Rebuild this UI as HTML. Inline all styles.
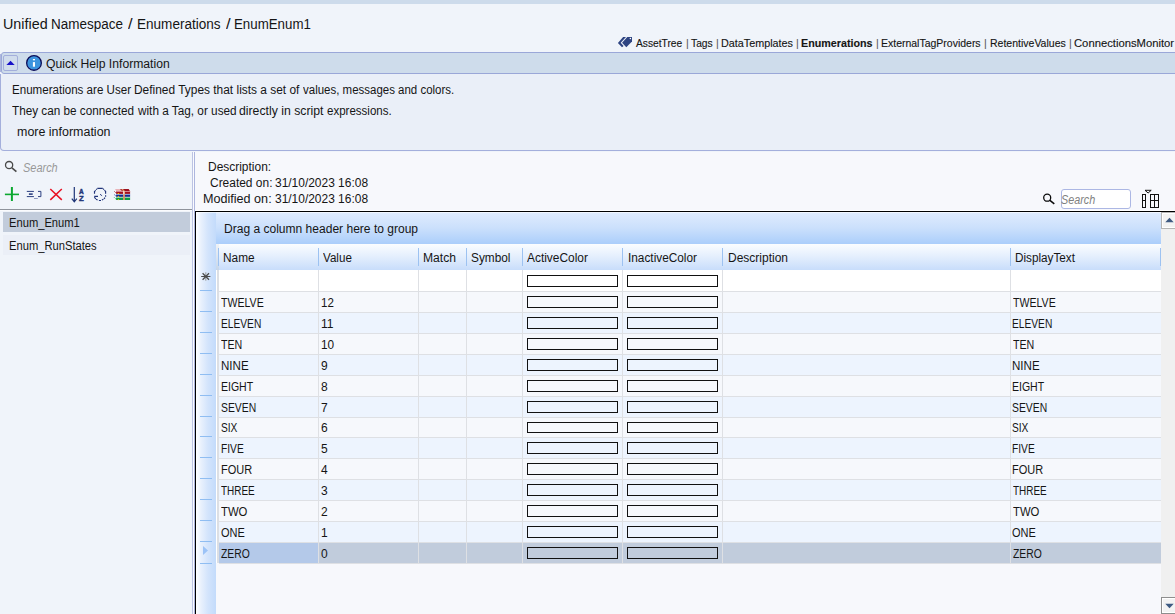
<!DOCTYPE html>
<html><head><meta charset="utf-8"><title>Enumerations</title>
<style>
*{box-sizing:border-box;margin:0;padding:0}
html,body{width:1175px;height:614px;overflow:hidden}
body{background:#f0f4fa;font-family:"Liberation Sans",sans-serif;position:relative}
div,span,svg{position:absolute}
.t{white-space:nowrap;line-height:1;transform-origin:0 0;color:#151515}
.r{left:219px;width:942px}
.v{width:1px;background:#d9d9d9}
.cb{width:91px;height:12px;border:1px solid #111}
.il{left:200px;width:12px;height:1px;background:#8fbdf2}
.hs{top:248px;width:1px;height:18px;background:#9dc2f1}
</style></head><body>
<div style="left:0px;top:0px;width:1175px;height:4px;background:#cddbeb;"></div>
<div style="left:0px;top:54px;width:1px;height:18px;background:#adb7de;"></div>
<div style="left:1px;top:52px;width:1180px;height:22px;background:#cedceb;border:1px solid #9aa7d8;border-radius:3px 0 0 3px"></div>
<div style="left:0px;top:74px;width:1180px;height:77px;background:#eaeff8;border:1px solid #a4afdc;border-top:none;border-radius:0 0 0 4px"></div>
<div style="left:3px;top:55px;width:15px;height:16px;background:#d0dcec;border:1px solid #a3aedb;border-radius:2px"></div>
<svg style="left:6px;top:60px" width="10" height="6" viewBox="0 0 10 6"><path d="M0.4 5.1 L4.55 0.7 L8.7 5.1Z" fill="#1812c8"/></svg>
<svg style="left:24px;top:54px" width="20" height="20" viewBox="0 0 20 20"><circle cx="10" cy="8.9" r="7.35" fill="#3d94de" stroke="#0b0c58" stroke-width="1.3"/><rect x="8.9" y="8.1" width="2.1" height="4.6" fill="#fff"/><rect x="8.9" y="5" width="2.1" height="1.3" fill="#fff"/></svg>
<div style="left:195px;top:152px;width:980px;height:59px;background:#f7f8fc;"></div>
<div style="left:195px;top:210px;width:980px;height:1px;background:#ffffff;"></div>
<div style="left:192px;top:152px;width:1px;height:462px;background:#bcc3e3;"></div>
<div style="left:193px;top:152px;width:1px;height:462px;background:#fbfbfe;"></div>
<div style="left:194px;top:152px;width:1px;height:462px;background:#adb6de;"></div>
<div style="left:0px;top:209px;width:192px;height:1px;background:#8e939b;"></div>
<div style="left:0px;top:210px;width:192px;height:1px;background:#fafbfd;"></div>
<div style="left:3px;top:212px;width:187px;height:20px;background:#c2ccdb;"></div>
<div style="left:3px;top:235px;width:187px;height:20px;background:#ebeff7;"></div>
<div style="left:195px;top:211px;width:980px;height:403px;background:#f7f8fc;"></div>
<div style="left:195px;top:211px;width:980px;height:1px;background:#000;"></div>
<div style="left:195px;top:211px;width:1px;height:403px;background:#000;"></div>
<div style="left:196px;top:212px;width:20px;height:402px;background:linear-gradient(90deg,#ffffff 0,#e9f1fd 25%,#d3e4fc 60%,#c3dbfb 100%);"></div>
<div style="left:216px;top:212px;width:945px;height:32px;background:linear-gradient(#e0ecfe 0,#cbe0fc 50%,#abcefb 100%);"></div>
<div style="left:196px;top:212px;width:965px;height:1px;background:rgba(255,255,255,.6);"></div>
<div style="left:216px;top:244px;width:945px;height:26px;background:linear-gradient(#fbfdff 0,#e3eefd 50%,#c8ddfb 100%);"></div>
<div style="left:216px;top:244px;width:3px;height:26px;background:linear-gradient(#f1f3f6,#c6d6ea);"></div>
<div class="hs" style="left:218px"></div><div class="hs" style="left:318px"></div><div class="hs" style="left:418px"></div><div class="hs" style="left:466px"></div><div class="hs" style="left:522px"></div><div class="hs" style="left:622px"></div><div class="hs" style="left:722px"></div><div class="hs" style="left:1010px"></div><div class="hs" style="left:1160px"></div>
<div style="left:216px;top:270px;width:1px;height:293px;background:#fff;"></div>
<div style="left:217px;top:270px;width:2px;height:293px;background:#dcdfe4;"></div>
<div style="left:219px;top:270px;width:942px;height:21px;background:#ffffff;"></div>
<div style="left:219px;top:292px;width:942px;height:20px;background:#f6f8fc;"></div>
<div style="left:219px;top:313px;width:942px;height:20px;background:#edf4fe;"></div>
<div style="left:219px;top:334px;width:942px;height:20px;background:#f6f8fc;"></div>
<div style="left:219px;top:355px;width:942px;height:20px;background:#edf4fe;"></div>
<div style="left:219px;top:376px;width:942px;height:20px;background:#f6f8fc;"></div>
<div style="left:219px;top:397px;width:942px;height:20px;background:#edf4fe;"></div>
<div style="left:219px;top:418px;width:942px;height:19px;background:#f6f8fc;"></div>
<div style="left:219px;top:438px;width:942px;height:20px;background:#edf4fe;"></div>
<div style="left:219px;top:459px;width:942px;height:20px;background:#f6f8fc;"></div>
<div style="left:219px;top:480px;width:942px;height:20px;background:#edf4fe;"></div>
<div style="left:219px;top:501px;width:942px;height:20px;background:#f6f8fc;"></div>
<div style="left:219px;top:522px;width:942px;height:20px;background:#edf4fe;"></div>
<div style="left:219px;top:543px;width:942px;height:20px;background:#c1ccdc;"></div>
<div style="left:219px;top:543px;width:99px;height:20px;background:#b4c9e9;"></div>
<div style="left:219px;top:291px;width:942px;height:1px;background:#dee0e4;"></div>
<div style="left:219px;top:312px;width:942px;height:1px;background:#dee0e4;"></div>
<div style="left:219px;top:333px;width:942px;height:1px;background:#dee0e4;"></div>
<div style="left:219px;top:354px;width:942px;height:1px;background:#dee0e4;"></div>
<div style="left:219px;top:375px;width:942px;height:1px;background:#dee0e4;"></div>
<div style="left:219px;top:396px;width:942px;height:1px;background:#dee0e4;"></div>
<div style="left:219px;top:417px;width:942px;height:1px;background:#dee0e4;"></div>
<div style="left:219px;top:437px;width:942px;height:1px;background:#dee0e4;"></div>
<div style="left:219px;top:458px;width:942px;height:1px;background:#dee0e4;"></div>
<div style="left:219px;top:479px;width:942px;height:1px;background:#dee0e4;"></div>
<div style="left:219px;top:500px;width:942px;height:1px;background:#dee0e4;"></div>
<div style="left:219px;top:521px;width:942px;height:1px;background:#dee0e4;"></div>
<div style="left:219px;top:542px;width:942px;height:1px;background:#dee0e4;"></div>
<div style="left:219px;top:563px;width:942px;height:1px;background:#dee0e4;"></div>
<div style="left:318px;top:270px;width:1px;height:294px;background:#dee0e4;"></div>
<div style="left:418px;top:270px;width:1px;height:294px;background:#dee0e4;"></div>
<div style="left:466px;top:270px;width:1px;height:294px;background:#dee0e4;"></div>
<div style="left:522px;top:270px;width:1px;height:294px;background:#dee0e4;"></div>
<div style="left:622px;top:270px;width:1px;height:294px;background:#dee0e4;"></div>
<div style="left:722px;top:270px;width:1px;height:294px;background:#dee0e4;"></div>
<div style="left:1010px;top:270px;width:1px;height:294px;background:#dee0e4;"></div>
<div class="cb" style="left:527px;top:275px"></div><div class="cb" style="left:627px;top:275px"></div>
<div class="cb" style="left:527px;top:296px"></div><div class="cb" style="left:627px;top:296px"></div>
<div class="cb" style="left:527px;top:317px"></div><div class="cb" style="left:627px;top:317px"></div>
<div class="cb" style="left:527px;top:338px"></div><div class="cb" style="left:627px;top:338px"></div>
<div class="cb" style="left:527px;top:359px"></div><div class="cb" style="left:627px;top:359px"></div>
<div class="cb" style="left:527px;top:380px"></div><div class="cb" style="left:627px;top:380px"></div>
<div class="cb" style="left:527px;top:401px"></div><div class="cb" style="left:627px;top:401px"></div>
<div class="cb" style="left:527px;top:422px;height:11px"></div><div class="cb" style="left:627px;top:422px;height:11px"></div>
<div class="cb" style="left:527px;top:442px"></div><div class="cb" style="left:627px;top:442px"></div>
<div class="cb" style="left:527px;top:463px"></div><div class="cb" style="left:627px;top:463px"></div>
<div class="cb" style="left:527px;top:484px"></div><div class="cb" style="left:627px;top:484px"></div>
<div class="cb" style="left:527px;top:505px"></div><div class="cb" style="left:627px;top:505px"></div>
<div class="cb" style="left:527px;top:526px"></div><div class="cb" style="left:627px;top:526px"></div>
<div class="cb" style="left:527px;top:547px"></div><div class="cb" style="left:627px;top:547px"></div>
<div class="il" style="top:290px"></div><div class="il" style="top:311px"></div><div class="il" style="top:332px"></div><div class="il" style="top:353px"></div><div class="il" style="top:374px"></div><div class="il" style="top:395px"></div><div class="il" style="top:416px"></div><div class="il" style="top:436px"></div><div class="il" style="top:457px"></div><div class="il" style="top:478px"></div><div class="il" style="top:499px"></div><div class="il" style="top:520px"></div><div class="il" style="top:541px"></div><div class="il" style="top:563px"></div>
<svg style="left:200px;top:271px" width="12" height="12" viewBox="0 0 12 12" fill="none" stroke="#4a4a4a" stroke-width="1"><path d="M1.2 5.5 H10.4"/><path d="M5.8 1.3 V9.7" stroke="#9a9a9a"/><path d="M2.6 2.3 L9 8.7 M9 2.3 L2.6 8.7" stroke-width="1.25"/></svg>
<svg style="left:202px;top:545px" width="7" height="11" viewBox="0 0 7 11"><path d="M1 1 L6 5.5 L1 10Z" fill="#9cc3f7"/></svg>
<div style="left:1161px;top:212px;width:14px;height:402px;background:#f0f0f0;"></div>
<div style="left:1161px;top:212px;width:16px;height:17px;background:#f3f3f3;border:1px solid #b5b5b5;box-shadow:inset 0 0 0 1px #fff"></div>
<div style="left:1161px;top:597px;width:16px;height:17px;background:#f3f3f3;border:1px solid #8e8e8e;box-shadow:inset 0 0 0 1px #fff"></div>
<svg style="left:1165px;top:217px" width="9" height="6" viewBox="0 0 9 6"><path d="M0.3 5.3 L4.5 0.8 L8.7 5.3Z" fill="#3e5a82"/></svg>
<svg style="left:1165px;top:603px" width="9" height="6" viewBox="0 0 9 6"><path d="M0.3 0.7 L4.5 5.2 L8.7 0.7Z" fill="#3e5a82"/></svg>
<div style="left:1061px;top:189px;width:70px;height:20px;background:#fff;border:1px solid #acb7e4;border-radius:3px"></div>
<svg style="left:617px;top:36px" width="16" height="12" viewBox="617 36 16 12"><path d="M627.3 36.9 L632 36.9 L632 41.5 L626.3 47.2 L622.1 42.8Z" fill="#2e4482"/><path d="M623.1 36.9 L626 36.9 L620.7 42.8 L623.6 45.9 L622 47.2 L617.9 42.9Z" fill="#2e4482"/><circle cx="630.4" cy="38.5" r="0.75" fill="#fff"/></svg>
<svg style="left:3px;top:158px" width="16" height="16" viewBox="3 158 16 16" fill="none" stroke="#4a4a4a"><circle cx="9.1" cy="165.1" r="3.6" stroke-width="1.3"/><path d="M11.9 167.9 L16.4 171.7" stroke-width="1.6"/></svg>
<svg style="left:1041px;top:191px" width="16" height="16" viewBox="1041 191 16 16" fill="none" stroke="#0a0a0a"><circle cx="1047.2" cy="197.7" r="3.5" stroke-width="1.3"/><path d="M1049.9 200.4 L1054.3 203.8" stroke-width="1.6"/></svg>
<svg style="left:1140px;top:188px" width="20" height="21" viewBox="1140 188 20 21" fill="none" stroke="#111" stroke-width="1"><rect x="1142.5" y="194.5" width="3" height="13"/><path d="M1142.5 200.5 H1145.5"/><rect x="1150.5" y="194.5" width="8" height="13"/><path d="M1154.5 194.5 V207.5 M1150.5 200.5 H1158.5"/><path d="M1145 190.3 H1151.2 L1148.1 193Z" stroke-width="1"/></svg>
<svg style="left:3px;top:185px" width="132" height="20" viewBox="3 185 132 20" fill="none">
<path d="M4.9 194.4 H19" stroke="#0ba830" stroke-width="1.6"/><path d="M11.9 187 V201" stroke="#0ba830" stroke-width="2"/>
<g stroke="#2b3f80" stroke-width="1"><path d="M26.8 191.4 H33.9 M26.8 196.6 H33.9"/><path d="M28.9 194.1 H32.7" stroke-width="1.6"/><path d="M38 191.4 H40.9 V196.6 H38"/><path d="M34 198.5 H37.8" stroke="#8d99c0"/></g>
<path d="M50.3 189 L61.8 199.9 M61.8 189 L50.3 199.9" stroke="#e81123" stroke-width="1.5"/>
<g stroke="#1f3678" stroke-width="1.2"><path d="M74.3 187 V201.6 M71.8 198.6 L74.3 201.8 L76.8 198.6"/></g>
<path d="M97.3 188.3 H102.8 M94.9 191.3 L95.6 190.2 M96.1 189.7 L97 188.8 M94.5 191.1 V193.7 M103.1 188.8 L104 189.6 M104.5 190.1 L105.3 191 M105.6 191.1 V193.7 M105.6 195.2 V196.8 M105 197.6 L104 198.9 M103.4 199.3 L101.9 200 M98.9 200.5 H101 M97.6 200.1 L96 199.3 M95.7 199 L94.4 197 M94.2 196.4 H98" stroke="#22357a" stroke-width="1.15"/><path d="M100 194.2 L102.1 195.8" stroke="#22357a" stroke-width="0.9"/>
<g stroke="none"><path d="M115 188.9 H128.8 L130 190.9 H116.2Z" fill="#e9b3b8"/><path d="M120 188.9 H128.6 L129.9 190.9 H122Z" fill="#9c1020"/><rect x="116.1" y="191" width="14" height="2.9" fill="#a3101f"/><rect x="116.1" y="191" width="14" height="0.8" fill="#e3a0a8"/><rect x="116.1" y="194.3" width="14" height="2.5" fill="#16298c"/><rect x="116.1" y="194.3" width="14" height="0.7" fill="#a9bdf0"/><rect x="116.1" y="197.2" width="14" height="2.8" fill="#0e9a44"/><rect x="116.1" y="197.2" width="14" height="0.7" fill="#b9e8c6"/><path d="M114 191 L116.4 193.4" stroke="#b03040" stroke-width="0.9" stroke-dasharray="1 0.7"/><path d="M114 194.3 L116.4 196.6" stroke="#3346a0" stroke-width="0.9" stroke-dasharray="1 0.7"/><path d="M114 197.2 L116.2 199.4" stroke="#2aa55a" stroke-width="0.9" stroke-dasharray="1 0.7"/><path d="M121.2 188.9 H123 L124.9 191 V200 H123.1 V191.3Z" fill="#dc9468"/><rect x="123.2" y="191" width="1.2" height="3.4" fill="#f7e8df"/><rect x="117.8" y="193" width="1.3" height="1" fill="#f5c800"/><rect x="117.8" y="195.9" width="1.3" height="1" fill="#f5c800"/><rect x="117.8" y="199.1" width="1.3" height="1" fill="#f5c800"/></g>
<text x="79" y="193.7" font-family="Liberation Sans, sans-serif" font-weight="bold" font-size="7.4" textLength="4.7" lengthAdjust="spacingAndGlyphs" fill="#1f3678" stroke="#1f3678" stroke-width="0.45">A</text>
<text x="79.1" y="200.9" font-family="Liberation Sans, sans-serif" font-weight="bold" font-size="7.4" textLength="4.7" lengthAdjust="spacingAndGlyphs" fill="#1f3678" stroke="#1f3678" stroke-width="0.45">Z</text>
</svg>
<span class="t" style="left:3px;top:18px;font-size:13.8px;transform:scaleX(1.0390);">Unified </span>
<span class="t" style="left:51px;top:18px;font-size:13.8px;transform:scaleX(0.9764);">Namespace </span>
<span class="t" style="left:128px;top:18px;font-size:13.8px;transform:scaleX(1.2000);">/ </span>
<span class="t" style="left:137px;top:18px;font-size:13.8px;transform:scaleX(0.9827);">Enumerations </span>
<span class="t" style="left:226px;top:18px;font-size:13.8px;transform:scaleX(1.2000);">/ </span>
<span class="t" style="left:234px;top:18px;font-size:13.8px;transform:scaleX(0.9641);">EnumEnum1 </span>
<span class="t" style="left:636px;top:38px;font-size:10.67px;transform:scaleX(0.9592);-webkit-text-stroke:0.12px #151515;">AssetTree </span>
<span class="t" style="left:686px;top:38px;font-size:10.67px;color:#505050;">| </span>
<span class="t" style="left:691px;top:38px;font-size:10.67px;transform:scaleX(0.9636);-webkit-text-stroke:0.12px #151515;">Tags </span>
<span class="t" style="left:716px;top:38px;font-size:10.67px;color:#505050;">| </span>
<span class="t" style="left:721px;top:38px;font-size:10.67px;transform:scaleX(1.0129);-webkit-text-stroke:0.12px #151515;">DataTemplates </span>
<span class="t" style="left:796px;top:38px;font-size:10.67px;color:#505050;">| </span>
<span class="t" style="left:801px;top:38px;font-size:10.67px;transform:scaleX(1.0071);font-weight:bold;-webkit-text-stroke:0.12px #151515;">Enumerations </span>
<span class="t" style="left:876px;top:38px;font-size:10.67px;color:#505050;">| </span>
<span class="t" style="left:881px;top:38px;font-size:10.67px;transform:scaleX(0.9835);-webkit-text-stroke:0.12px #151515;">ExternalTagProviders </span>
<span class="t" style="left:984px;top:38px;font-size:10.67px;color:#505050;">| </span>
<span class="t" style="left:990px;top:38px;font-size:10.67px;transform:scaleX(0.9861);-webkit-text-stroke:0.12px #151515;">RetentiveValues </span>
<span class="t" style="left:1069px;top:38px;font-size:10.67px;color:#505050;">| </span>
<span class="t" style="left:1074px;top:38px;font-size:10.67px;transform:scaleX(1.0557);-webkit-text-stroke:0.12px #151515;">ConnectionsMonitor </span>
<span class="t" style="left:46px;top:58px;font-size:12px;transform:scaleX(1.0137);">Quick Help Information </span>
<span class="t" style="left:12px;top:84px;font-size:12px;transform:scaleX(0.9644);">Enumerations are User </span>
<span class="t" style="left:134px;top:84px;font-size:12px;transform:scaleX(0.9934);">Defined Types that lists a set of </span>
<span class="t" style="left:303px;top:84px;font-size:12px;transform:scaleX(0.9567);">values, messages and colors. </span>
<span class="t" style="left:12px;top:105px;font-size:12px;transform:scaleX(0.9778);">They can be connected </span>
<span class="t" style="left:138px;top:105px;font-size:12px;transform:scaleX(0.9815);">with a Tag, or used </span>
<span class="t" style="left:239px;top:105px;font-size:12px;transform:scaleX(1.0213);">directly in script </span>
<span class="t" style="left:327px;top:105px;font-size:12px;transform:scaleX(0.9597);">expressions. </span>
<span class="t" style="left:17px;top:126px;font-size:12px;transform:scaleX(1.0384);">more information </span>
<span class="t" style="left:23px;top:162px;font-size:12px;transform:scaleX(0.9128);font-style:italic;color:#989898;">Search </span>
<span class="t" style="left:9px;top:217px;font-size:12px;transform:scaleX(0.9315);">Enum_Enum1 </span>
<span class="t" style="left:9px;top:240px;font-size:12px;transform:scaleX(0.9315);">Enum_RunStates </span>
<span class="t" style="left:208px;top:161px;font-size:12px;transform:scaleX(0.9959);">Description: </span>
<span class="t" style="left:210px;top:177px;font-size:12px;transform:scaleX(0.9959);">Created on: </span>
<span class="t" style="left:275px;top:177px;font-size:12px;transform:scaleX(0.9957);">31/10/2023 16:08 </span>
<span class="t" style="left:203px;top:193px;font-size:12px;transform:scaleX(1.0498);">Modified on: </span>
<span class="t" style="left:275px;top:193px;font-size:12px;transform:scaleX(0.9957);">31/10/2023 16:08 </span>
<span class="t" style="left:1061px;top:194px;font-size:12px;transform:scaleX(0.8993);font-style:italic;color:#808080;">Search </span>
<span class="t" style="left:224px;top:223px;font-size:12px;transform:scaleX(1.0031);">Drag a column header here to group </span>
<span class="t" style="left:223px;top:252px;font-size:12px;transform:scaleX(0.9869);">Name </span>
<span class="t" style="left:323px;top:252px;font-size:12px;transform:scaleX(0.9675);">Value </span>
<span class="t" style="left:423px;top:252px;font-size:12px;transform:scaleX(1.0097);">Match </span>
<span class="t" style="left:471px;top:252px;font-size:12px;transform:scaleX(0.9858);">Symbol </span>
<span class="t" style="left:527px;top:252px;font-size:12px;transform:scaleX(0.9927);">ActiveColor </span>
<span class="t" style="left:628px;top:252px;font-size:12px;transform:scaleX(0.9855);">InactiveColor </span>
<span class="t" style="left:728px;top:252px;font-size:12px;">Description </span>
<span class="t" style="left:1015px;top:252px;font-size:12px;transform:scaleX(0.9776);">DisplayText </span>
<span class="t" style="left:221px;top:297px;font-size:12px;transform:scaleX(0.8817);">TWELVE </span>
<span class="t" style="left:321px;top:297px;font-size:12px;transform:scaleX(0.9617);">12 </span>
<span class="t" style="left:1013px;top:297px;font-size:12px;transform:scaleX(0.8817);">TWELVE </span>
<span class="t" style="left:221px;top:318px;font-size:12px;transform:scaleX(0.8505);">ELEVEN </span>
<span class="t" style="left:321px;top:318px;font-size:12px;transform:scaleX(1.0091);">11 </span>
<span class="t" style="left:1012px;top:318px;font-size:12px;transform:scaleX(0.8505);">ELEVEN </span>
<span class="t" style="left:221px;top:339px;font-size:12px;transform:scaleX(0.8879);">TEN </span>
<span class="t" style="left:321px;top:339px;font-size:12px;transform:scaleX(0.9833);">10 </span>
<span class="t" style="left:1013px;top:339px;font-size:12px;transform:scaleX(0.8879);">TEN </span>
<span class="t" style="left:221px;top:360px;font-size:12px;transform:scaleX(0.9651);">NINE </span>
<span class="t" style="left:321px;top:360px;font-size:12px;">9 </span>
<span class="t" style="left:1012px;top:360px;font-size:12px;transform:scaleX(0.9651);">NINE </span>
<span class="t" style="left:221px;top:381px;font-size:12px;transform:scaleX(0.8761);">EIGHT </span>
<span class="t" style="left:321px;top:381px;font-size:12px;">8 </span>
<span class="t" style="left:1012px;top:381px;font-size:12px;transform:scaleX(0.8761);">EIGHT </span>
<span class="t" style="left:221px;top:402px;font-size:12px;transform:scaleX(0.8637);">SEVEN </span>
<span class="t" style="left:321px;top:402px;font-size:12px;">7 </span>
<span class="t" style="left:1012px;top:402px;font-size:12px;transform:scaleX(0.8637);">SEVEN </span>
<span class="t" style="left:221px;top:422px;font-size:12px;transform:scaleX(0.8486);">SIX </span>
<span class="t" style="left:321px;top:422px;font-size:12px;">6 </span>
<span class="t" style="left:1012px;top:422px;font-size:12px;transform:scaleX(0.8486);">SIX </span>
<span class="t" style="left:221px;top:443px;font-size:12px;transform:scaleX(0.8515);">FIVE </span>
<span class="t" style="left:321px;top:443px;font-size:12px;">5 </span>
<span class="t" style="left:1012px;top:443px;font-size:12px;transform:scaleX(0.8515);">FIVE </span>
<span class="t" style="left:221px;top:464px;font-size:12px;transform:scaleX(0.9169);">FOUR </span>
<span class="t" style="left:321px;top:464px;font-size:12px;">4 </span>
<span class="t" style="left:1012px;top:464px;font-size:12px;transform:scaleX(0.9169);">FOUR </span>
<span class="t" style="left:221px;top:485px;font-size:12px;transform:scaleX(0.8300);">THREE </span>
<span class="t" style="left:321px;top:485px;font-size:12px;">3 </span>
<span class="t" style="left:1013px;top:485px;font-size:12px;transform:scaleX(0.8300);">THREE </span>
<span class="t" style="left:221px;top:506px;font-size:12px;transform:scaleX(0.9431);">TWO </span>
<span class="t" style="left:321px;top:506px;font-size:12px;">2 </span>
<span class="t" style="left:1013px;top:506px;font-size:12px;transform:scaleX(0.9431);">TWO </span>
<span class="t" style="left:221px;top:527px;font-size:12px;transform:scaleX(0.9160);">ONE </span>
<span class="t" style="left:321px;top:527px;font-size:12px;">1 </span>
<span class="t" style="left:1012px;top:527px;font-size:12px;transform:scaleX(0.9160);">ONE </span>
<span class="t" style="left:221px;top:548px;font-size:12px;transform:scaleX(0.8646);">ZERO </span>
<span class="t" style="left:321px;top:548px;font-size:12px;">0 </span>
<span class="t" style="left:1013px;top:548px;font-size:12px;transform:scaleX(0.8646);">ZERO </span>
</body></html>
